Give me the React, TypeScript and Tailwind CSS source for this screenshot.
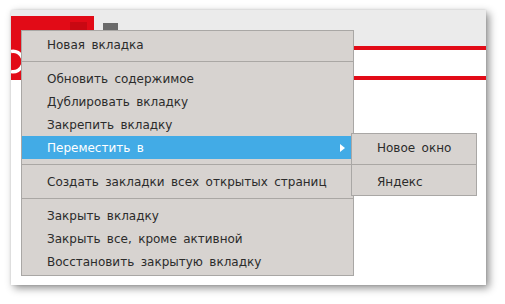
import React from 'react';

type Item = { label: string; active?: boolean; sub?: boolean } | 'sep';

const items: Item[] = [
  { label: 'Новая вкладка' },
  'sep',
  { label: 'Обновить содержимое' },
  { label: 'Дублировать вкладку' },
  { label: 'Закрепить вкладку' },
  { label: 'Переместить в', active: true, sub: true },
  'sep',
  { label: 'Создать закладки всех открытых страниц' },
  'sep',
  { label: 'Закрыть вкладку' },
  { label: 'Закрыть все, кроме активной' },
  { label: 'Восстановить закрытую вкладку' },
];

const Separator: React.FC = () => (
  <div className="h-[11px] flex items-center">
    <div className="h-px w-full bg-[#aaa7a4]" />
  </div>
);

const MenuRow: React.FC<{ label: string; active?: boolean; sub?: boolean }> = ({ label, active, sub }) => (
  <div
    className={
      active
        ? 'h-[23px] flex items-center justify-between pl-[25px] pr-[8px] bg-[#42abe6] text-white'
        : 'h-[23px] flex items-center pl-[25px] text-[#2b2b2b]'
    }
  >
    <span className="whitespace-nowrap [word-spacing:2.6px]">{label}</span>
    {sub && (
      <svg width="5" height="8" viewBox="0 0 5 8">
        <path d="M0 0 L5 4 L0 8 Z" fill="#ffffff" />
      </svg>
    )}
  </div>
);

export default function App() {
  return (
    <div
      className="relative w-[505px] h-[304px] bg-white overflow-hidden text-[12px]"
      style={{ fontFamily: '"DejaVu Sans", "Liberation Sans", sans-serif' }}
    >
      {/* window */}
      <div className="ml-[11px] mt-[10px] w-[475px] h-[275px] bg-white shadow-[3px_3px_8px_rgba(0,0,0,0.45),0_0_2px_rgba(0,0,0,0.12)] flex">
        <div className="w-[83px] bg-[#ebebeb] pt-[6px] self-start">
          <div className="relative h-[64px] bg-[#e20b17]">
            <div className="absolute left-[59px] top-[6px] w-[17px] h-[17px] bg-[#c90812] flex items-end justify-center">
              <span className="text-[#f3b8bc] text-[11px] leading-none">×</span>
            </div>
            <svg className="absolute left-0 top-[33px]" width="14" height="25" viewBox="0 0 14 25">
              <path d="M0 2.5 A10 10 0 0 1 11.5 9 M11.5 16 A10 10 0 0 1 0 22.5" stroke="#ffffff" strokeWidth="3.5" fill="none" />
            </svg>
          </div>
        </div>
        <div className="flex-1 flex flex-col">
          <div className="h-[36px] bg-[#ebebeb] pl-[9px] pt-[13px]">
            <div className="w-[15px] h-[12px] bg-[#6a6a6a] flex items-end justify-center">
              <div className="w-[3px] h-[4px] bg-white" />
            </div>
          </div>
          <div className="h-[4px] bg-[#e20b17]" />
          <div className="h-[26px]" />
          <div className="h-[4px] bg-[#e20b17]" />
        </div>
      </div>

      {/* context menu */}
      <div className="absolute left-[21px] top-[30px] w-[333px] bg-[#d7d3d0] border border-[#a9a7a5] py-[2px]">
        {items.map((it, i) =>
          it === 'sep' ? <Separator key={i} /> : <MenuRow key={i} {...it} />
        )}
      </div>

      {/* submenu */}
      <div className="absolute left-[351px] top-[133px] w-[126px] bg-[#d7d3d0] border border-[#a9a7a5] py-[2px]">
        <MenuRow label="Новое окно" />
        <Separator />
        <MenuRow label="Яндекс" />
      </div>
    </div>
  );
}
